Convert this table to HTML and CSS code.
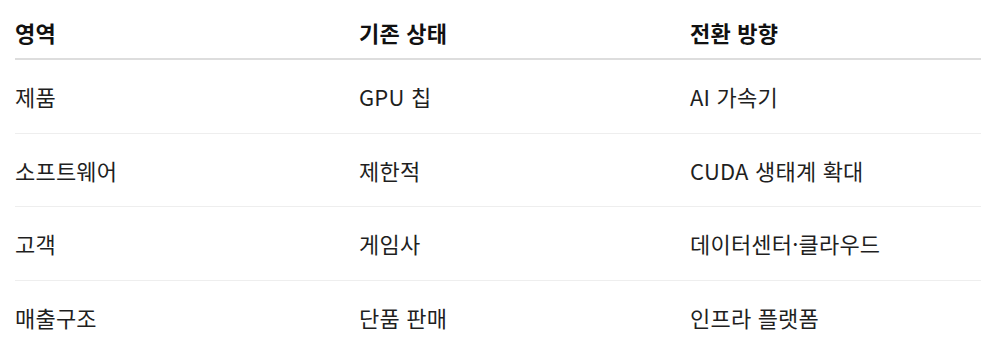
FILE: index.html
```html
<!DOCTYPE html>
<html lang="ko">
<head>
<meta charset="utf-8">
<link rel="stylesheet" href="styles.css">
</head>
<body>
<table class="compare">
  <thead>
    <tr>
      <th class="col-a">영역</th>
      <th class="col-b">기존 상태</th>
      <th class="col-c">전환 방향</th>
    </tr>
  </thead>
  <tbody>
    <tr><td>제품</td><td>GPU 칩</td><td>AI 가속기</td></tr>
    <tr><td>소프트웨어</td><td>제한적</td><td>CUDA 생태계 확대</td></tr>
    <tr><td>고객</td><td>게임사</td><td>데이터센터·클라우드</td></tr>
    <tr><td>매출구조</td><td>단품 판매</td><td>인프라 플랫폼</td></tr>
  </tbody>
</table>
</body>
</html>
```
FILE: styles.css
```css
html, body {
  margin: 0;
  padding: 0;
  background: #ffffff;
}
body {
  font-family: "Noto Sans CJK KR", "Noto Sans", sans-serif;
  color: #1f1f1f;
}
.compare {
  margin-left: 15px;
  width: 966px;
  border-collapse: collapse;
  table-layout: fixed;
  font-size: 22px;
  line-height: 30px;
  letter-spacing: 0.2px;
}
.compare th {
  text-align: left;
  font-weight: 700;
  color: #111111;
  padding: 17px 0 11px 0;
  border-bottom: 2px solid #dddddd;
}
.compare td {
  padding: 21px 0 21.5px 0;
  border-bottom: 1px solid #eeeeee;
}
.col-a { width: 344px; }
.col-b { width: 331px; }
.col-c { width: 291px; }
```
